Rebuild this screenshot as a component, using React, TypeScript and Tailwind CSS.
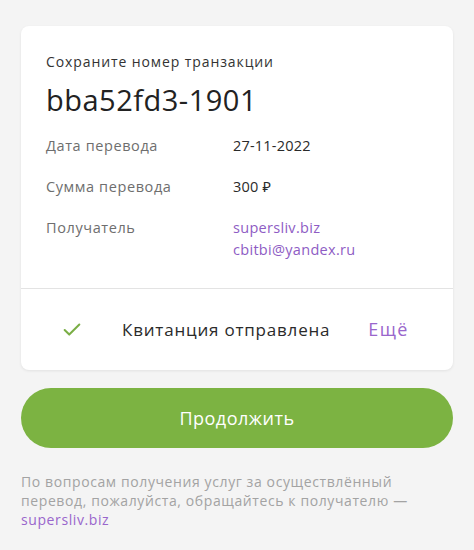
import { Check } from "lucide-react";

const rows = [
  { label: "Дата перевода", value: "27-11-2022" },
  { label: "Сумма перевода", value: "300 ₽" },
];

export default function App() {
  return (
    <div
      className="min-h-[550px] w-full bg-[#f4f4f4] px-[21px] pt-[26px] pb-6"
      style={{ fontFamily: '"Open Sans", "Noto Sans", sans-serif' }}
    >
      <div className="rounded-lg bg-white shadow-[0_1px_3px_rgba(0,0,0,0.08)]">
        <div className="px-[25px] pt-[26px] pb-[27px]">
          <div className="text-[14px] leading-5 text-[#333] tracking-[0.9px]">Сохраните номер транзакции</div>
          <div className="mt-[10px] text-[29px] leading-[36px] text-[#222] tracking-[0.5px]">bba52fd3-1901</div>
          <div className="mt-[17px] flex flex-col gap-[19px] text-[14.5px] leading-[22px]">
            {rows.map((r) => (
              <div key={r.label} className="flex">
                <div className="w-[187px] tracking-[0.6px] text-[#6e6e6e]">{r.label}</div>
                <div className="tracking-[0.2px] text-[#2a2a2a]">{r.value}</div>
              </div>
            ))}
            <div className="flex">
              <div className="w-[187px] tracking-[0.6px] text-[#6e6e6e]">Получатель</div>
              <div className="flex flex-col tracking-[0.3px] text-[#8e5cc4]">
                <span>supersliv.biz</span>
                <span>cbitbi@yandex.ru</span>
              </div>
            </div>
          </div>
        </div>
        <div className="flex h-[82px] items-center border-t border-[#e3e3e3] pl-[40px]">
          <Check className="h-[22px] w-[22px] text-[#7aae45]" strokeWidth={2.2} />
          <span className="ml-[39px] text-[17px] tracking-[0.8px] text-[#2a2a2a]">Квитанция отправлена</span>
          <span className="ml-[38px] text-[18px] tracking-[1.4px] text-[#9966cc]">Ещё</span>
        </div>
      </div>
      <button className="mt-[18px] flex h-[60px] w-full items-center justify-center rounded-full bg-[#7cb342] text-[18px] tracking-[0.5px] text-white">
        Продолжить
      </button>
      <p className="mt-[24px] text-[14px] leading-[19px] tracking-[0.6px] text-[#a3a3a3]">
        По вопросам получения услуг за осуществлённый
        <br />
        перевод, пожалуйста, обращайтесь к получателю —
        <br />
        <span className="text-[#9966cc]">supersliv.biz</span>
      </p>
    </div>
  );
}
